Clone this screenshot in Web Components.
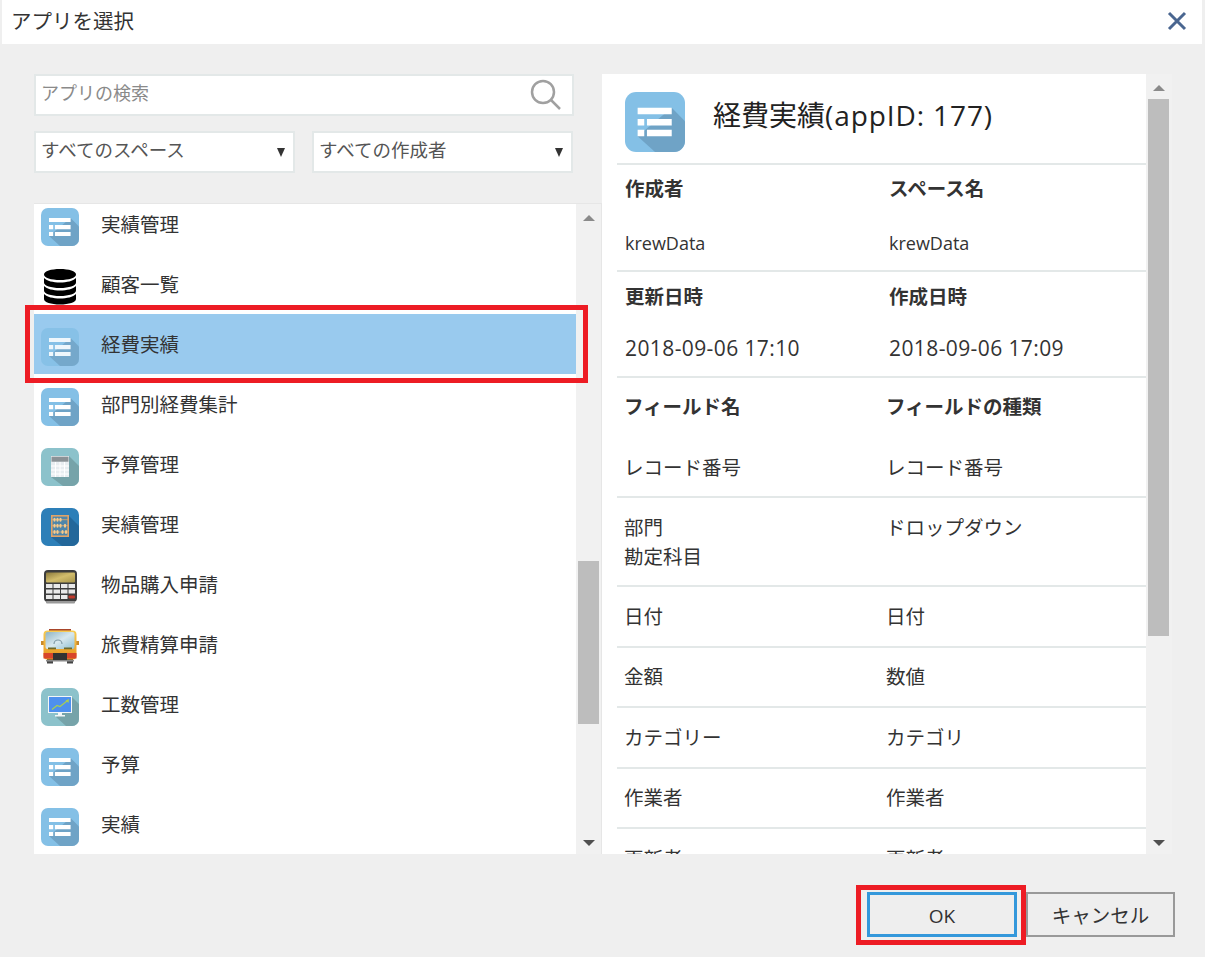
<!DOCTYPE html>
<html lang="ja">
<head>
<meta charset="utf-8">
<title>アプリを選択</title>
<style>
    html, body { margin: 0; height: 100%; background: #efefef; }
    body {
        font-family: "Open Sans", "Noto Sans CJK JP", sans-serif;
        color: #333;
        overflow: hidden;
    }
</style>
</head>
<body>
<app-dialog>
    <app-list slot="list">
        <app-row name="実績管理" icon="table"></app-row>
        <app-row name="顧客一覧" icon="db"></app-row>
        <app-row name="経費実績" icon="table" selected></app-row>
        <app-row name="部門別経費集計" icon="table"></app-row>
        <app-row name="予算管理" icon="calc"></app-row>
        <app-row name="実績管理" icon="abacus"></app-row>
        <app-row name="物品購入申請" icon="calc2"></app-row>
        <app-row name="旅費精算申請" icon="bus"></app-row>
        <app-row name="工数管理" icon="monitor"></app-row>
        <app-row name="予算" icon="table"></app-row>
        <app-row name="実績" icon="table"></app-row>
    </app-list>
    <app-detail slot="detail"></app-detail>
</app-dialog>

<script>
// icons, all on a 38x38 box like the app tiles
const tile = (bg, shade, inner, shadow) => `
    <svg width="38" height="38" viewBox="0 0 38 38">
        <defs><clipPath id="c"><rect width="38" height="38" rx="7"/></clipPath></defs>
        <g clip-path="url(#c)">
            <rect width="38" height="38" fill="${bg}"/>
            <path d="${shadow}" fill="${shade}"/>
            ${inner}
        </g>
    </svg>`;

const ICONS = {
    table: tile('#84c0e6', '#6fa3c6', `
        <path fill="#fff" d="M8 10h21.600v4.100H8zM8 17.100h4.200v4.100H8zM13.900 17.100h15.700v4.100H13.900zM8 23.900h4.200v4.100H8zM13.900 23.900h15.700v4.100H13.900z"/>`,
        'M29.600 10L38 18.500V38H19L8 28z'),
    calc: tile('#8cc2cb', '#76a3a9', `
        <rect x="10" y="8" width="18" height="21" fill="#e8edf0"/>
        <rect x="10.500" y="8.700" width="17" height="5" fill="#8b9296"/>
        <path stroke="#fff" stroke-width="1" d="M10 18h18M10 22h18M10 26h18M14.500 14v15M19 14v15M23.500 14v15"/>`,
        'M28 8L38 18V38H22L10 29z'),
    abacus: tile('#2d7fb8', '#23679a', `
        <rect x="10.800" y="7.800" width="16.400" height="20.400" fill="#4e86ab" stroke="#e0a468" stroke-width="1.600"/>
        <path stroke="#e0a468" stroke-width=".8" d="M11 11.700h16M11 17.700h16M11 24h16"/>
        <g fill="#f6cb8c">
            <ellipse cx="13.500" cy="11.700" rx="1.200" ry="2"/><ellipse cx="16.500" cy="11.700" rx="1.200" ry="2"/><ellipse cx="19.500" cy="11.700" rx="1.200" ry="2"/>
            <ellipse cx="13.500" cy="17.700" rx="1.200" ry="2"/><ellipse cx="16.500" cy="17.700" rx="1.200" ry="2"/><ellipse cx="19.500" cy="17.700" rx="1.200" ry="2"/><ellipse cx="24" cy="17.700" rx="1.200" ry="2"/>
            <ellipse cx="13.500" cy="24" rx="1.200" ry="2"/><ellipse cx="16.500" cy="24" rx="1.200" ry="2"/><ellipse cx="21.500" cy="24" rx="1.200" ry="2"/><ellipse cx="25" cy="24" rx="1.200" ry="2"/>
        </g>`,
        'M28 8L38 18V38H21L10 29z'),
    monitor: tile('#8cc2cb', '#76a3a9', `
        <rect x="7.500" y="8.500" width="23" height="16" fill="#4e90ee" stroke="#f2f6f8" stroke-width="1"/>
        <path d="M11 21.500l5-4 3 1 7-5.500" fill="none" stroke="#a9cf52" stroke-width="1.200"/>
        <path d="M28 11l-.5 4-3-2.500z" fill="#a9cf52"/>
        <path fill="#f2f6f8" d="M17 25h4v2h3v1.500H14V27h3z"/>`,
        'M31 9L38 16V38H25L15 29z'),
    db: `<svg width="38" height="38" viewBox="0 0 38 38">
        <path fill="#000" d="M19 1c9 0 16 2.200 16 5.500S28 12 19 12 3 9.800 3 6.500 10 1 19 1z"/>
        <path fill="#000" d="M3 10c3 3 9 4.500 16 4.500S32 13 35 10v4.500c0 3.200-7 5.500-16 5.500S3 17.700 3 14.500z"/>
        <path fill="#000" d="M3 18c3 3 9 4.500 16 4.500S32 21 35 18v4.500c0 3.200-7 5.500-16 5.500S3 25.700 3 22.500z"/>
        <path fill="#000" d="M3 26c3 3 9 4.500 16 4.500S32 29 35 26v5c0 3.200-7 5.500-16 5.500S3 34.200 3 31z"/>
    </svg>`,
    calc2: `<svg width="38" height="38" viewBox="0 0 38 38">
        <defs><linearGradient id="lcd" x2="1" y2="1"><stop offset="0" stop-color="#8c7a3c"/><stop offset=".5" stop-color="#d2bd6c"/><stop offset="1" stop-color="#a8954a"/></linearGradient></defs>
        <rect x="3" y="2" width="33" height="32" rx="4" fill="#3d3d3d"/>
        <rect x="5" y="33" width="29" height="2.500" rx="1" fill="#9a9a9a"/>
        <rect x="5" y="4.500" width="29" height="10" rx="1" fill="url(#lcd)"/>
        <g fill="#e9e9e9">
            <rect x="5" y="16" width="6.500" height="4"/><rect x="12.500" y="16" width="6.500" height="4"/><rect x="20" y="16" width="6.500" height="4"/><rect x="27.500" y="16" width="6.500" height="4"/>
            <rect x="5" y="21.500" width="6.500" height="4"/><rect x="12.500" y="21.500" width="6.500" height="4"/><rect x="20" y="21.500" width="6.500" height="4"/><rect x="27.500" y="21.500" width="6.500" height="4"/>
            <rect x="5" y="27" width="6.500" height="4"/><rect x="12.500" y="27" width="6.500" height="4"/><rect x="20" y="27" width="6.500" height="4"/>
        </g>
        <rect x="27.500" y="27.500" width="6.500" height="3" rx="1" fill="#c0392b"/>
    </svg>`,
    bus: `<svg width="38" height="38" viewBox="0 0 38 38">
        <defs>
            <linearGradient id="paint" x2="0" y2="1"><stop offset="0" stop-color="#f7cc55"/><stop offset="1" stop-color="#e8941c"/></linearGradient>
            <linearGradient id="glass" x2="1" y2="1"><stop offset="0" stop-color="#8fb4c4"/><stop offset=".5" stop-color="#d8e8ee"/><stop offset="1" stop-color="#8fc0d2"/></linearGradient>
        </defs>
        <rect x="0" y="13" width="3" height="4" fill="#c98a2b"/><rect x="35" y="13" width="3" height="4" fill="#c98a2b"/>
        <rect x="6" y="31" width="6" height="4.500" fill="#444"/><rect x="26" y="31" width="6" height="4.500" fill="#444"/>
        <rect x="8" y="1" width="22" height="2" fill="#a8452a"/>
        <rect x="2.500" y="2.500" width="33" height="29" rx="4" fill="url(#paint)"/>
        <rect x="4.500" y="4" width="29" height="17" rx="2" fill="url(#glass)"/>
        <path d="M13 16a4 4 0 0 1 8 0" fill="none" stroke="#7f9aa6" stroke-width="1.200"/>
        <rect x="7" y="19.500" width="8" height="1.800" fill="#6d6a2c"/><rect x="23" y="19.500" width="8" height="1.800" fill="#6d6a2c"/>
        <rect x="2.500" y="25" width="33" height="5.500" fill="#d8452a"/>
        <rect x="12" y="25" width="14" height="7" fill="#333"/>
        <rect x="5" y="32" width="28" height="1.500" fill="#8a8a8a"/>
    </svg>`
};

// one row of the app list
class AppRow extends HTMLElement {
    connectedCallback() {
        const selected = this.hasAttribute('selected');
        this.attachShadow({ mode: 'open' });
        this.shadowRoot.innerHTML = `
            <style>
                :host {
                    display: flex;
                    align-items: center;
                    height: 60px;
                    padding-left: 7px;
                    color: #333;
                    background: ${selected ? '#99caee' : 'transparent'};
                }
                .icon { width: 38px; height: 38px; flex: none; margin-top: 6px; ${selected ? 'opacity: .85;' : ''} }
                .name { margin: 2px 0 0 22px; line-height: 1; font-size: 19.500px; }
            </style>
            <div class="icon">${ICONS[this.getAttribute('icon')]}</div>
            <div class="name">${this.getAttribute('name')}</div>
        `;
    }
}

// scrollbar strip with a fake thumb, offsets in px from top of the strip
class AppScroll extends HTMLElement {
    connectedCallback() {
        const top = this.getAttribute('top');
        const size = this.getAttribute('size');
        const edge = this.hasAttribute('edge') ? '1px solid #e6e6e6' : '0';
        this.attachShadow({ mode: 'open' });
        this.shadowRoot.innerHTML = `
            <style>
                :host {
                    display: flex;
                    flex-direction: column;
                    flex: none;
                    width: 26px;
                    background: #f1f1f1;
                    box-sizing: border-box;
                    padding: 0 2px;
                    border-right: ${edge};
                }
                .arrow { flex: none; width: 21px; height: 0; display: flex; justify-content: center; }
                .up, .down { width: 0; height: 0; border-left: 6px solid transparent; border-right: 6px solid transparent; }
                .up { border-bottom: 6px solid #8a8a8a; margin-top: 11px; }
                .down { border-top: 6px solid #505050; margin-top: -14px; }
                .thumb { flex: none; width: 21px; background: #bdbdbd; height: ${size}px; margin-top: ${top}px; }
                .fill { flex: 1; }
            </style>
            <div class="arrow"><div class="up"></div></div>
            <div class="thumb"></div>
            <div class="fill"></div>
            <div class="arrow"><div class="down"></div></div>
        `;
    }
}

class AppList extends HTMLElement {
    constructor() {
        super();
        this.attachShadow({ mode: 'open' });
        this.shadowRoot.innerHTML = `
            <style>
                :host { display: flex; height: 650px; width: 568px; margin-top: 31px; box-shadow: 0 -1px 0 #e6e6e6; }
                .items { flex: none; width: 542px; background: #fff; overflow: hidden; }
                .scrolled { margin-top: -10px; }
            </style>
            <div class="items"><div class="scrolled"><slot></slot></div></div>
            <app-scroll top="357" size="163" edge></app-scroll>
        `;
    }
}

// filter dropdown, only the closed state is needed
class AppSelect extends HTMLElement {
    constructor() {
        super();
        this.attachShadow({ mode: 'open' });
        this.shadowRoot.innerHTML = `
            <style>
                :host {
                    display: flex;
                    align-items: center;
                    justify-content: space-between;
                    box-sizing: border-box;
                    height: 42px;
                    background: #fff;
                    border: 2px solid #e3e8e8;
                    padding: 0 8px 0 5px;
                    font-size: 18.500px;
                    color: #555;
                }
                .text { padding-bottom: 6px; }
                .arrow { width: 0; height: 0; border-left: 4.500px solid transparent; border-right: 4.500px solid transparent; border-top: 9px solid #333; }
            </style>
            <span class="text"><slot></slot></span>
            <span class="arrow"></span>
        `;
    }
}

class AppDetail extends HTMLElement {
    constructor() {
        super();
        // left, right, row height, space above the text
        const rows = [
            ['レコード番号', 'レコード番号', 60, 17],
            ['部門<br>勘定科目', 'ドロップダウン', 87, 15],
            ['日付', '日付', 59, 15],
            ['金額', '数値', 58, 14],
            ['カテゴリー', 'カテゴリ', 59, 15],
            ['作業者', '作業者', 58, 14],
            ['更新者', '更新者', 58, 15]
        ];
        this.attachShadow({ mode: 'open' });
        this.shadowRoot.innerHTML = `
            <style>
                :host { display: flex; height: 780px; width: 570px; }
                .panel { flex: none; width: 544px; background: #fff; overflow: hidden; font-size: 19.500px; color: #333; }
                .head { display: flex; align-items: center; height: 89px; padding-left: 23px; }
                .head h1 { margin: 0 0 9px 28px; font-size: 28px; font-weight: 400; color: #222; white-space: nowrap; }
                .head h1 span { letter-spacing: .9px; }
                .logo { width: 60px; height: 60px; margin-top: 7px; }
                .logo svg { width: 60px; height: 60px; display: block; }
                .line { height: 2px; margin-left: 15px; background: #e3e8e8; }
                .pair { display: grid; grid-template-columns: 264px 1fr; padding-left: 23px; box-sizing: border-box; line-height: 30px; }
                .pair b { font-size: 19.500px; }
                .m1 { height: 105px; padding-top: 9px; grid-template-rows: 54px 42px; }
                .m2 { height: 104px; padding-top: 10px; grid-template-rows: 51px 43px; }
                .m1 span { font-size: 18px; }
                .m2 span { font-size: 21px; letter-spacing: .4px; }
                .fields { grid-template-columns: 262px 1fr; padding-left: 22px; }
                .names { height: 58px; align-items: center; }
                .row { line-height: 29px; }
            </style>
            <div class="panel">
                <div class="head">
                    <div class="logo">${ICONS.table}</div>
                    <h1>経費実績<span>(appID: 177)</span></h1>
                </div>
                <div class="line"></div>
                <div class="pair m1">
                    <b>作成者</b><b>スペース名</b>
                    <span>krewData</span><span>krewData</span>
                </div>
                <div class="line"></div>
                <div class="pair m2">
                    <b>更新日時</b><b>作成日時</b>
                    <span>2018-09-06 17:10</span><span>2018-09-06 17:09</span>
                </div>
                <div class="line"></div>
                <div class="pair fields names"><b>フィールド名</b><b>フィールドの種類</b></div>
                ${rows.map(r => `
                    <div class="pair fields row" style="height:${r[2]}px;padding-top:${r[3]}px">
                        <span>${r[0]}</span><span>${r[1]}</span>
                    </div>
                    <div class="line"></div>`).join('')}
            </div>
            <app-scroll top="25" size="537"></app-scroll>
        `;
    }
}

class AppDialog extends HTMLElement {
    constructor() {
        super();
        this.attachShadow({ mode: 'open' });
        this.shadowRoot.innerHTML = `
            <style>
                :host { display: block; position: relative; height: 957px; background: #efefef; overflow: hidden; }
                header {
                    display: flex;
                    align-items: center;
                    justify-content: space-between;
                    height: 44px;
                    margin: 0 3px 0 2px;
                    padding: 0 15px 0 9px;
                    background: #fff;
                    font-size: 20.500px;
                    color: #333;
                }
                header span { padding-bottom: 4px; }
                header svg { margin-top: -3px; }
                main { display: flex; gap: 28px; padding: 30px 0 0 34px; }
                .left { width: 540px; }
                .search {
                    display: flex;
                    align-items: center;
                    justify-content: space-between;
                    box-sizing: border-box;
                    height: 42px;
                    background: #fff;
                    border: 2px solid #e3e8e8;
                    padding: 0 10px 0 5px;
                    font-size: 18px;
                    color: #8a8a8a;
                }
                .search span { padding-bottom: 7px; }
                .selects { display: grid; grid-template-columns: 261px 261px; gap: 17px; margin-top: 15px; }
                footer { display: flex; justify-content: flex-end; gap: 9px; padding: 38px 30px 0 0; }
                button {
                    box-sizing: border-box;
                    height: 45px;
                    font: inherit;
                    font-size: 19.500px;
                    color: #333;
                    background: #eee;
                    border: 2px solid #999;
                    padding: 0;
                }
                .ok { width: 150px; border: 3px solid #3498db; font-size: 19px; padding-top: 2px; }
                .cancel { width: 149px; }
                .mark { position: absolute; box-sizing: border-box; border: 5px solid #ed1c24; pointer-events: none; }
            </style>
            <header>
                <span>アプリを選択</span>
                <svg width="20" height="20" viewBox="0 0 20 20"><path d="M2 2l16 16M18 2L2 18" stroke="#4a6690" stroke-width="3" fill="none"/></svg>
            </header>
            <main>
                <div class="left">
                    <div class="search">
                        <span>アプリの検索</span>
                        <svg width="32" height="32" viewBox="0 0 32 32" fill="none" stroke="#a0a0a0" stroke-width="2.500"><circle cx="13" cy="13" r="11"/><path d="M21 21l9 9"/></svg>
                    </div>
                    <div class="selects">
                        <app-select>すべてのスペース</app-select>
                        <app-select>すべての作成者</app-select>
                    </div>
                    <slot name="list"></slot>
                </div>
                <slot name="detail"></slot>
            </main>
            <footer>
                <button class="ok">OK</button>
                <button class="cancel">キャンセル</button>
            </footer>
            <div class="mark" style="left:25px;top:305px;width:563px;height:78px"></div>
            <div class="mark" style="left:856px;top:885px;width:170px;height:60px"></div>
        `;
    }
}

customElements.define('app-row', AppRow);
customElements.define('app-scroll', AppScroll);
customElements.define('app-list', AppList);
customElements.define('app-select', AppSelect);
customElements.define('app-detail', AppDetail);
customElements.define('app-dialog', AppDialog);
</script>
</body>
</html>
